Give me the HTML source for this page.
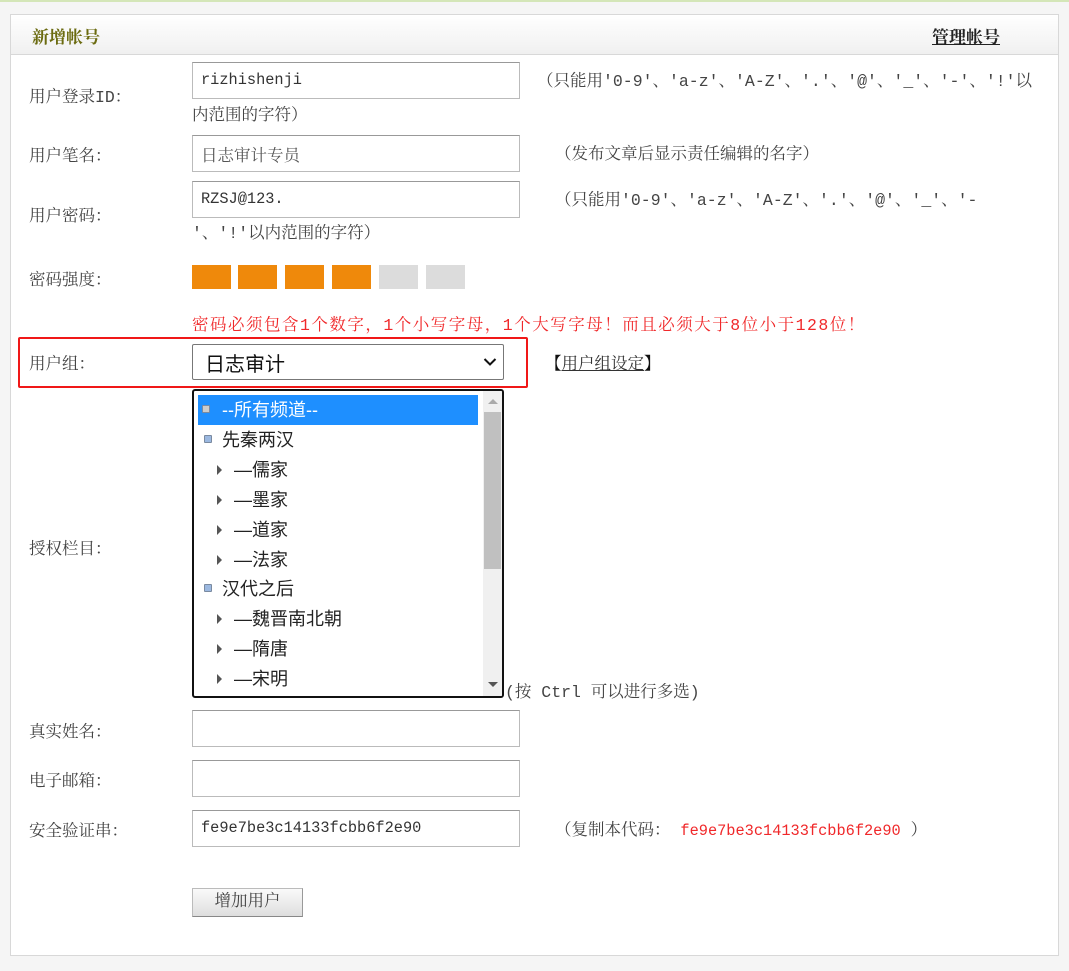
<!DOCTYPE html>
<html><head><meta charset="utf-8"><style>
*{margin:0;padding:0;box-sizing:border-box}
body{width:1069px;height:971px;background:#f5f5f5;position:relative;overflow:hidden;font-family:"Liberation Mono","Noto Serif CJK SC",monospace;font-size:16.5px;color:#333}
.a{position:absolute;white-space:nowrap}
.top{left:0;top:0;width:1069px;height:2px;background:#d4e6b8}
.panel{left:10px;top:14px;width:1049px;height:942px;background:#fff;border:1px solid #d8d8d8}
.hdr{left:11px;top:15px;width:1047px;height:40px;background:linear-gradient(#fff,#f0f0f0);border-bottom:1px solid #d8d8d8}
.lab{left:29px;color:#444}
.inp{left:192px;width:328px;height:37px;border:1px solid #bbb;border-top-color:#999;font-family:"Liberation Mono","Noto Serif CJK SC",monospace;font-size:15.3px;padding:8px 8px 0;color:#333;background:#fff}
.tip{color:#444}
.sb{top:265px;width:39px;height:24px;background:#ef890b}
.sg{background:#dcdcdc}
.li{left:0;height:30px;line-height:30px;font-family:"Liberation Sans","Noto Sans CJK SC",sans-serif;font-size:18px;color:#222;width:285px}
.sq{position:absolute;top:10px;width:8px;height:8px;background:#9bb8e0;border:1px solid #7a8aa0;border-radius:1px}
.tri{position:absolute;top:10px;left:23px;width:0;height:0;border-left:5px solid #555;border-top:5px solid transparent;border-bottom:5px solid transparent}
</style></head><body>
<div class="a top"></div>
<div class="a panel"></div>
<div class="a hdr"></div>
<div class="a" style="left:32px;top:23px;font-size:17px;font-weight:bold;color:#6b6b10;font-family:'Liberation Serif','Noto Serif CJK SC',serif">新增帐号</div>
<div class="a" style="left:932px;top:23px;font-size:17px;font-weight:bold;color:#222;text-decoration:underline;font-family:'Liberation Serif','Noto Serif CJK SC',serif">管理帐号</div>

<div class="a lab" style="top:83px">用户登录ID：</div>
<div class="a inp" style="top:62px">rizhishenji</div>
<div class="a tip" style="left:537px;top:67px">（只能用'0-9'、'a-z'、'A-Z'、'.'、'@'、'_'、'-'、'!'以</div>
<div class="a tip" style="left:192px;top:101px">内范围的字符）</div>

<div class="a lab" style="top:142px">用户笔名：</div>
<div class="a inp" style="top:135px;color:#555;font-size:16.5px;padding-top:6px">日志审计专员</div>
<div class="a tip" style="left:555px;top:140px">（发布文章后显示责任编辑的名字）</div>

<div class="a lab" style="top:202px">用户密码：</div>
<div class="a inp" style="top:181px">RZSJ@123.</div>
<div class="a tip" style="left:555px;top:186px">（只能用'0-9'、'a-z'、'A-Z'、'.'、'@'、'_'、'-</div>
<div class="a tip" style="left:192px;top:219px">'、'!'以内范围的字符）</div>

<div class="a lab" style="top:266px">密码强度：</div>
<div class="a sb" style="left:192px"></div><div class="a sb" style="left:238px"></div><div class="a sb" style="left:285px"></div><div class="a sb" style="left:332px"></div><div class="a sb sg" style="left:379px"></div><div class="a sb sg" style="left:426px"></div>
<div class="a" style="left:192px;top:311px;color:#f0282a;letter-spacing:1.5px">密码必须包含1个数字，1个小写字母，1个大写字母！而且必须大于8位小于128位！</div>

<div class="a" style="left:18px;top:337px;width:510px;height:51px;border:2px solid #f01818;border-radius:2px"></div>
<div class="a lab" style="top:350px">用户组：</div>
<div class="a" style="left:192px;top:344px;width:312px;height:36px;border:1px solid #777;border-radius:2px;background:#fff;font-family:'Liberation Sans','Noto Sans CJK SC',sans-serif;font-size:20px;color:#111;padding:3px 12px">日志审计
<svg style="position:absolute;left:290px;top:12px" width="14" height="10" viewBox="0 0 14 10"><path d="M1.5 2L7 7.5 12.5 2" stroke="#111" stroke-width="2" fill="none"/></svg></div>
<div class="a" style="left:545px;top:350px;color:#111;font-weight:bold">【<span style="text-decoration:underline;font-weight:normal;color:#333">用户组设定</span>】</div>

<div class="a lab" style="top:535px">授权栏目：</div>
<div class="a" style="left:192px;top:389px;width:312px;height:309px;border:2px solid #111;border-radius:3px;background:#fff;overflow:hidden">
 <div class="a" style="left:289px;top:0;width:19px;height:305px;background:#f0f0f0"></div>
 <div class="a" style="left:290px;top:21px;width:17px;height:157px;background:#c0c0c0"></div>
 <div class="a" style="left:294px;top:8px;border-bottom:5px solid #aaa;border-left:5px solid transparent;border-right:5px solid transparent"></div>
 <div class="a" style="left:294px;top:291px;border-top:5px solid #555;border-left:5px solid transparent;border-right:5px solid transparent"></div>
 <div class="a" style="left:0;top:4px;width:285px">
  <div class="a li" style="top:0;left:4px;width:280px;background:#1e8fff;color:#fff"><span class="sq" style="left:4px;background:#ccc"></span><span style="position:absolute;left:24px">--所有频道--</span></div>
  <div class="a li" style="top:30px"><span class="sq" style="left:10px"></span><span style="position:absolute;left:28px">先秦两汉</span></div>
  <div class="a li" style="top:60px"><span class="tri"></span><span style="position:absolute;left:40px">—儒家</span></div>
  <div class="a li" style="top:90px"><span class="tri"></span><span style="position:absolute;left:40px">—墨家</span></div>
  <div class="a li" style="top:120px"><span class="tri"></span><span style="position:absolute;left:40px">—道家</span></div>
  <div class="a li" style="top:150px"><span class="tri"></span><span style="position:absolute;left:40px">—法家</span></div>
  <div class="a li" style="top:179px"><span class="sq" style="left:10px"></span><span style="position:absolute;left:28px">汉代之后</span></div>
  <div class="a li" style="top:209px"><span class="tri"></span><span style="position:absolute;left:40px">—魏晋南北朝</span></div>
  <div class="a li" style="top:239px"><span class="tri"></span><span style="position:absolute;left:40px">—隋唐</span></div>
  <div class="a li" style="top:269px"><span class="tri"></span><span style="position:absolute;left:40px">—宋明</span></div>
 </div>
</div>
<div class="a tip" style="left:505px;top:678px">(按 Ctrl 可以进行多选)</div>

<div class="a lab" style="top:718px">真实姓名：</div>
<div class="a inp" style="top:710px"></div>
<div class="a lab" style="top:767px">电子邮箱：</div>
<div class="a inp" style="top:760px"></div>
<div class="a lab" style="top:817px">安全验证串：</div>
<div class="a inp" style="top:810px">fe9e7be3c14133fcbb6f2e90</div>
<div class="a tip" style="left:555px;top:816px">（复制本代码： <span style="color:#f0282a;font-size:15.3px">fe9e7be3c14133fcbb6f2e90</span> ）</div>

<div class="a" style="left:192px;top:888px;width:111px;height:29px;border:1px solid #bbb;border-bottom-color:#888;border-right-color:#999;background:linear-gradient(#fafafa,#dedede);color:#444;text-align:center;line-height:26px">增加用户</div>
</body></html>
